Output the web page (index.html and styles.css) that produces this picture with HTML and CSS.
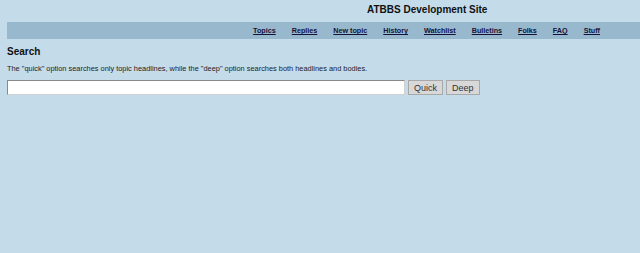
FILE: index.html
```html
<!DOCTYPE html>
<html lang="en">
<head>
  <meta charset="UTF-8" />
  <title>Search - ATBBS Development Site</title>
  <link rel="stylesheet" href="styles.css">
</head>
<body>
  <div class="header">
    <h1 class="site-title">ATBBS Development Site</h1>
  </div>

  <ul class="nav">
    <li><a href="#">Topics</a></li>
    <li><a href="#">Replies</a></li>
    <li><a href="#">New topic</a></li>
    <li><a href="#">History</a></li>
    <li><a href="#">Watchlist</a></li>
    <li><a href="#">Bulletins</a></li>
    <li><a href="#">Folks</a></li>
    <li><a href="#">FAQ</a></li>
    <li><a href="#">Stuff</a></li>
  </ul>

  <div class="content">
    <h2>Search</h2>
    <p class="note">The "quick" option searches only topic headlines, while the "deep" option searches both headlines and bodies.</p>
    <form class="search-form">
      <input type="text" class="search-box" />
      <button type="button" class="btn">Quick</button>
      <button type="button" class="btn">Deep</button>
    </form>
  </div>
</body>
</html>
```

FILE: styles.css
```css
body {
  margin: 0;
  background-color: #c4dbea;
  color: #111;
  font-family: 'Liberation Sans', Arial, sans-serif;
}

.header {
  height: 22px;
}

.site-title {
  margin: 0;
  padding: 4px 0 0 367px;
  font-size: 10px;
  line-height: 12px;
  font-weight: bold;
}

.nav {
  display: flex;
  justify-content: flex-end;
  align-items: flex-start;
  gap: 16px;
  list-style: none;
  margin: 0 0 0 7px;
  padding: 1px 40px 0 0;
  height: 17px;
  box-sizing: border-box;
  background-color: #98b9cd;
}

.nav li {
  line-height: 9px;
}

.nav a {
  color: #13133a;
  font-size: 7.2px;
  font-weight: bold;
}

.content {
  padding: 0 7px;
}

h2 {
  margin: 7px 0 0;
  font-size: 10px;
  line-height: 12px;
}

.note {
  margin: 6px 0 0;
  color: #222;
  font-size: 7.4px;
  line-height: 10px;
}

.search-form {
  display: flex;
  gap: 3px;
  margin-top: 6px;
}

.search-box {
  box-sizing: border-box;
  width: 398px;
  height: 15px;
  margin: 0;
  padding: 0 2px;
  border: 1px solid #8a8a8a;
  border-right-color: #d0d0d0;
  border-bottom-color: #d0d0d0;
  background: #fff;
}

.btn {
  box-sizing: border-box;
  height: 15px;
  margin: 0;
  padding: 0 5px;
  border: 1px solid #a8a8a8;
  background: #d8d8d8;
  color: #333;
  font-family: 'Liberation Sans', Arial, sans-serif;
  font-size: 9px;
}
```
